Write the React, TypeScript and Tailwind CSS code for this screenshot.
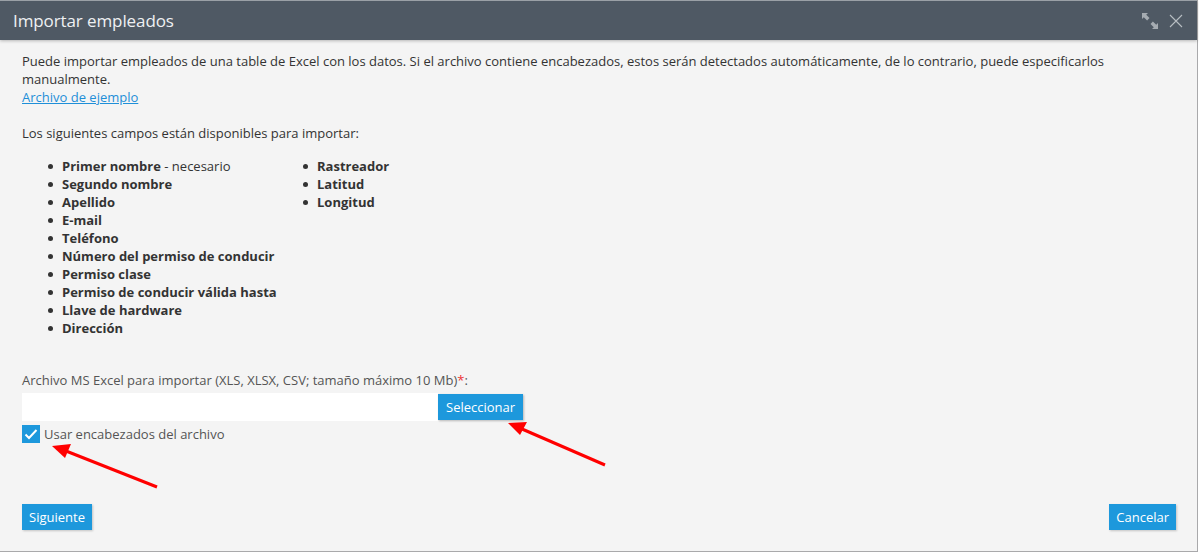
import React from "react";

const fields = [
  ["Primer nombre", true],
  ["Segundo nombre", false],
  ["Apellido", false],
  ["E-mail", false],
  ["Teléfono", false],
  ["Número del permiso de conducir", false],
  ["Permiso clase", false],
  ["Permiso de conducir válida hasta", false],
  ["Llave de hardware", false],
  ["Dirección", false],
] as const;

const fields2 = ["Rastreador", "Latitud", "Longitud"];

function Bullet({ children }: { children: React.ReactNode }) {
  return (
    <li className="flex items-center h-[18px]">
      <span className="w-[5px] h-[5px] rounded-full bg-[#333] mr-[9px] ml-[26px]" />
      {children}
    </li>
  );
}

export default function App() {
  return (
    <div
      className="relative w-[1199px] h-[553px] bg-white text-[13px] leading-[18px] text-[#333]"
      style={{ fontFamily: '"Open Sans", sans-serif' }}
    >
      <div className="w-[1198px] h-[552px] border-r border-b border-[#a9a9ab] bg-[#f4f4f4] flex flex-col">
        <div className="h-[40px] border-t border-[#9aa0a6] bg-[#4f5964] flex items-center justify-between pl-[13px] pr-[14px] shadow-[0_1px_3px_rgba(0,0,0,0.25)]">
          <span className="text-[17px] text-[#eef0f2] tracking-[-0.1px]">Importar empleados</span>
          <div className="flex items-center gap-[10px]">
            <svg width="18" height="18" viewBox="0 0 18 18">
              <path d="M1 1 L7 1 L5.2 2.8 L8.5 6.1 L6.1 8.5 L2.8 5.2 L1 7 Z" fill="#a6acb2" />
              <path d="M17 17 L11 17 L12.8 15.2 L9.5 11.9 L11.9 9.5 L15.2 12.8 L17 11 Z" fill="#a6acb2" />
            </svg>
            <svg width="14" height="14" viewBox="0 0 14 14">
              <path d="M1 1 L13 13 M13 1 L1 13" stroke="#b8bdc2" strokeWidth="1.1" />
            </svg>
          </div>
        </div>
        <div className="flex-1 flex flex-col pl-[22px] pr-[21px] pt-[12px] pb-[21px]">
          <p>
            Puede importar empleados de una table de Excel con los datos. Si el archivo contiene encabezados, estos serán detectados automáticamente, de lo contrario, puede especificarlos manualmente.
          </p>
          <a href="#" className="text-[#1f8fd8] underline w-fit">Archivo de ejemplo</a>
          <p className="mt-[18px]">Los siguientes campos están disponibles para importar:</p>
          <div className="flex mt-[15px]">
            <ul className="w-[255px] font-bold">
              {fields.map(([f, req]) => (
                <Bullet key={f}>
                  {f}
                  {req && <span className="font-normal">&nbsp;- necesario</span>}
                </Bullet>
              ))}
            </ul>
            <ul className="font-bold">
              {fields2.map((f) => (
                <Bullet key={f}>{f}</Bullet>
              ))}
            </ul>
          </div>
          <p className="mt-[34px] text-[#555]">
            Archivo MS Excel para importar (XLS, XLSX, CSV; tamaño máximo 10 Mb)<span className="text-[#e33]">*</span>:
          </p>
          <div className="flex items-center mt-[4px]">
            <div className="w-[416px] h-[28px] bg-white" />
            <button className="h-[26px] px-[8px] bg-[#1d98dc] text-white shadow-[1px_1px_2px_rgba(0,0,0,0.25)]">
              Seleccionar
            </button>
          </div>
          <label className="flex items-center mt-[4px] text-[#555]">
            <span className="w-[18px] h-[18px] bg-[#1d98dc] flex items-center justify-center mr-[4px]">
              <svg width="14" height="12" viewBox="0 0 14 12">
                <path d="M1.5 6.5 L5 10 L12.5 2" stroke="white" strokeWidth="2" fill="none" />
              </svg>
            </span>
            Usar encabezados del archivo
          </label>
          <div className="flex-1" />
          <div className="flex justify-between items-end">
            <button className="h-[26px] px-[7px] bg-[#1d98dc] text-white shadow-[1px_1px_2px_rgba(0,0,0,0.2)]">Siguiente</button>
            <button className="h-[26px] px-[7px] bg-[#1d98dc] text-white shadow-[1px_1px_2px_rgba(0,0,0,0.2)]">Cancelar</button>
          </div>
        </div>
      </div>
      <svg className="absolute left-0 top-0 pointer-events-none" width="1199" height="553">
        <line x1="605" y1="465" x2="522" y2="429" stroke="#f00" strokeWidth="3" />
        <polygon points="508,423 527,422 520,435" fill="#f00" />
        <line x1="157" y1="487" x2="66" y2="451" stroke="#f00" strokeWidth="3" />
        <polygon points="52,446 71,444 65,458" fill="#f00" />
      </svg>
    </div>
  );
}
